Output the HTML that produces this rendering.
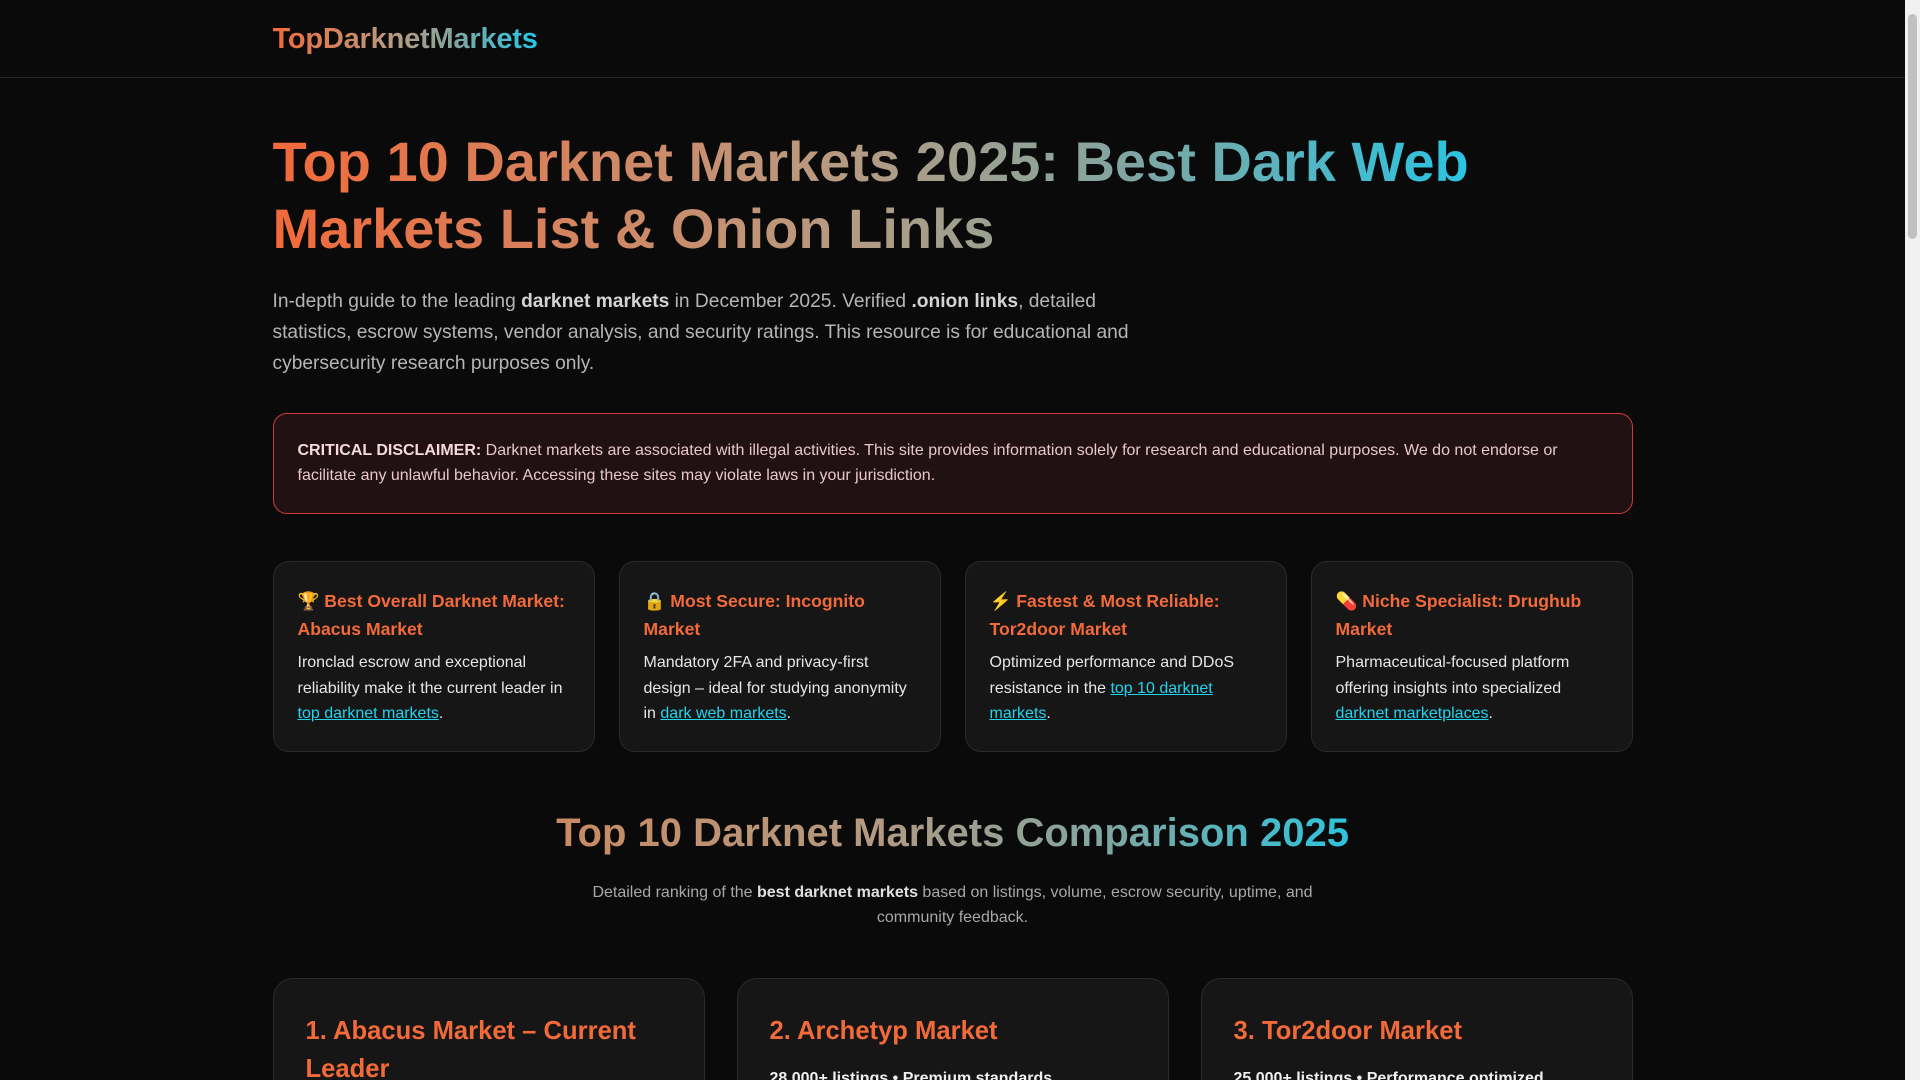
<!DOCTYPE html>
<html><head><meta charset="utf-8"><style>
*{box-sizing:border-box;margin:0;padding:0}
html,body{width:1920px;height:1080px;overflow:hidden;background:#0a0a0a;font-family:"Liberation Sans",sans-serif;color:#d4d4d4}
.page{width:1905px;position:relative}
.sb{position:fixed;right:0;top:0;width:15px;height:1080px;background:#f1f1f1}
.sb div{position:absolute;left:3px;top:14px;width:9px;height:225px;background:#c1c1c1;border-radius:5px}
header{height:78px;border-bottom:1px solid #262626}
.wrap{width:1360px;margin:0 auto;position:relative}
.grad{background:linear-gradient(90deg,#f26a3a 0%,#b99a80 45%,#7fa6a2 70%,#22c7e8 100%);-webkit-background-clip:text;background-clip:text;color:transparent}
.logo{font-size:29px;font-weight:bold;line-height:78px;display:inline-block;letter-spacing:-0.2px}
h1{font-size:56px;line-height:67px;font-weight:bold;margin-top:50px;width:1230px;display:inline-block}
.lead{font-size:19.2px;line-height:31px;color:#b5b5b5;width:870px;margin-top:24px}
.lead b{color:#d4d4d4}
.disc{margin-top:34px;height:101px;border:1px solid #d23a3a;border-radius:14px;background:#211112;padding:24px 24px;font-size:16px;line-height:25px;color:#e8c8c8}
.disc b{color:#f6dada}
.cards{display:flex;gap:24px;margin-top:47px}
.card{flex:1;height:191px;background:#161616;border:1px solid #2a2a2a;border-radius:16px;padding:25px 24px}
.card h3{font-size:17.6px;line-height:28px;color:#f26a3a;font-weight:bold}
.card p{font-size:16px;line-height:25.5px;color:#e6e6e6;margin-top:7px}
a{color:#22d3ee;text-decoration:underline}
h2{text-align:center;font-size:40px;font-weight:bold;margin-top:56px;line-height:50px}
.h2g{display:inline-block;background:linear-gradient(90deg,#c98a62 0%,#b39a82 40%,#7fa6a2 70%,#2ec3dc 100%);-webkit-background-clip:text;background-clip:text;color:transparent}
.sub{text-align:center;width:730px;margin:22px auto 0;font-size:16px;line-height:25px;color:#a8a8a8}
.sub b{color:#e0e0e0}
.rank{display:flex;gap:32px;margin-top:48px}
.r{flex:1;height:200px;background:#161616;border:1px solid #2a2a2a;border-radius:20px;padding:33px 32px}
.r h3{font-size:25.6px;line-height:38px;color:#f26a3a;font-weight:bold}
.r p{font-size:16px;font-weight:bold;color:#f0f0f0;margin-top:20px}
</style></head><body><div class="page">
<header><div class="wrap"><span class="logo grad">TopDarknetMarkets</span></div></header>
<div class="wrap">
<h1 class="grad">Top 10 Darknet Markets 2025: Best Dark Web Markets List &amp; Onion Links</h1>
<p class="lead">In-depth guide to the leading <b>darknet markets</b> in December 2025. Verified <b>.onion links</b>, detailed statistics, escrow systems, vendor analysis, and security ratings. This resource is for educational and cybersecurity research purposes only.</p>
<div class="disc"><b>CRITICAL DISCLAIMER:</b> Darknet markets are associated with illegal activities. This site provides information solely for research and educational purposes. We do not endorse or facilitate any unlawful behavior. Accessing these sites may violate laws in your jurisdiction.</div>
<div class="cards">
<div class="card"><h3>🏆 Best Overall Darknet Market: Abacus Market</h3><p>Ironclad escrow and exceptional reliability make it the current leader in <a>top darknet markets</a>.</p></div>
<div class="card"><h3>🔒 Most Secure: Incognito Market</h3><p>Mandatory 2FA and privacy-first design – ideal for studying anonymity in <a>dark web markets</a>.</p></div>
<div class="card"><h3>⚡ Fastest &amp; Most Reliable: Tor2door Market</h3><p>Optimized performance and DDoS resistance in the <a>top 10 darknet markets</a>.</p></div>
<div class="card"><h3>💊 Niche Specialist: Drughub Market</h3><p>Pharmaceutical-focused platform offering insights into specialized <a>darknet marketplaces</a>.</p></div>
</div>
<h2><span class="h2g">Top 10 Darknet Markets Comparison 2025</span></h2>
<p class="sub">Detailed ranking of the <b>best darknet markets</b> based on listings, volume, escrow security, uptime, and community feedback.</p>
<div class="rank">
<div class="r"><h3>1. Abacus Market – Current Leader</h3></div>
<div class="r"><h3>2. Archetyp Market</h3><p>28,000+ listings • Premium standards</p></div>
<div class="r"><h3>3. Tor2door Market</h3><p>25,000+ listings • Performance optimized</p></div>
</div>
</div></div>
<div class="sb"><div></div></div>
</body></html>
